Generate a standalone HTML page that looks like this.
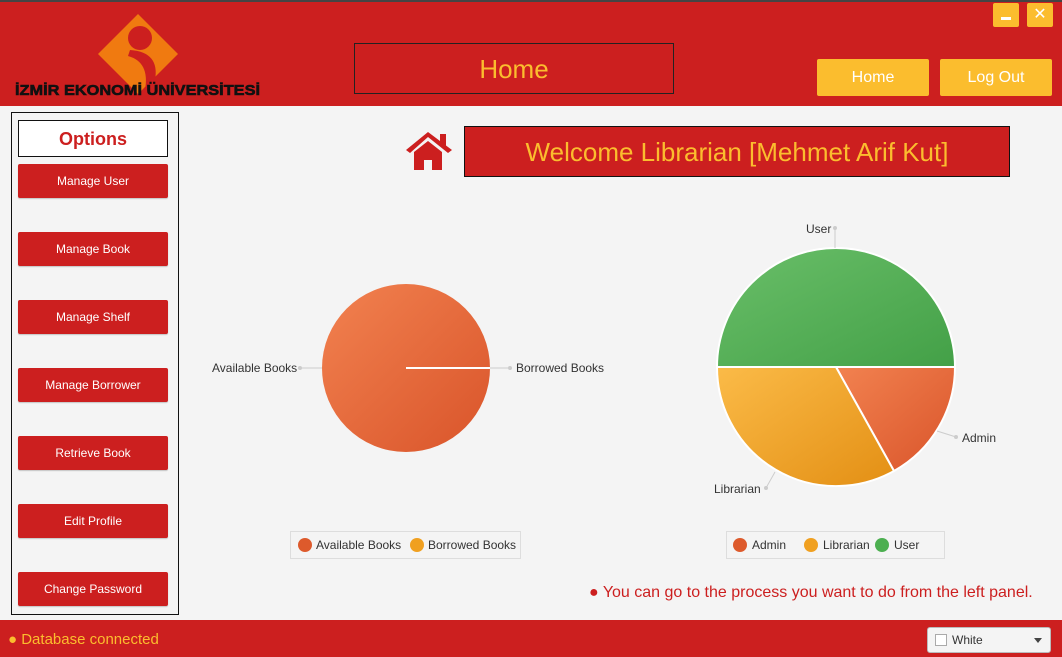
<!DOCTYPE html><html><head><style>
*{margin:0;padding:0;box-sizing:border-box}
body{width:1062px;height:657px;background:#f4f4f4;font-family:"Liberation Sans","DejaVu Sans",sans-serif;position:relative;overflow:hidden}
.a{position:absolute}
.hdr{left:0;top:0;width:1062px;height:106px;background:#cc1f1f;border-top:2px solid #444}
.btn{background:#cc1f1f;color:#fff;font-size:12px;text-align:center;line-height:34px;width:150px;height:34px;left:18px;border-radius:2px;box-shadow:0 1px 1px rgba(0,0,0,.2)}
.yb{background:#fbbd2e;color:#fff;font-size:16px;text-align:center;line-height:37px;height:37px;top:59px;border-radius:2px}
</style></head><body>
<div class="a hdr"></div>
<svg class="a" style="left:0;top:0" width="300" height="106">
<polygon points="138,14 178,54 138,94 98,54" fill="#f07a10"/>
<circle cx="140" cy="38" r="12" fill="#cc1f1f"/>
<path d="M130,50 Q160,52 155,80 L145,90 Q150,62 128,56 Z" fill="#cc1f1f"/>
<text x="15" y="95" font-family="Liberation Sans" font-weight="bold" font-size="15" fill="#111" stroke="#111" stroke-width="0.6" textLength="245" lengthAdjust="spacingAndGlyphs">İZMİR EKONOMİ ÜNİVERSİTESİ</text>
</svg>
<div class="a" style="left:354px;top:43px;width:320px;height:51px;border:1px solid #222;color:#fbbd2e;font-size:26px;text-align:center;line-height:50px">Home</div>
<div class="a yb" style="left:817px;width:112px">Home</div>
<div class="a yb" style="left:940px;width:112px">Log Out</div>
<div class="a" style="left:993px;top:3px;width:26px;height:24px;background:#fbbd2e;border-radius:2px"><div class="a" style="left:8px;top:14px;width:10px;height:3px;background:#fff"></div></div>
<div class="a" style="left:1027px;top:3px;width:26px;height:24px;background:#fbbd2e;border-radius:2px;color:#fff;font-weight:bold;text-align:center;line-height:24px;font-size:16px">✕</div>
<div class="a" style="left:11px;top:112px;width:168px;height:503px;border:1px solid #111"></div>
<div class="a" style="left:18px;top:120px;width:150px;height:37px;border:1px solid #111;background:#fff;color:#cc1f1f;font-weight:bold;font-size:18px;text-align:center;line-height:37px">Options</div>
<div class="a btn" style="top:164px">Manage User</div>
<div class="a btn" style="top:232px">Manage Book</div>
<div class="a btn" style="top:300px">Manage Shelf</div>
<div class="a btn" style="top:368px">Manage Borrower</div>
<div class="a btn" style="top:436px">Retrieve Book</div>
<div class="a btn" style="top:504px">Edit Profile</div>
<div class="a btn" style="top:572px">Change Password</div>
<svg class="a" style="left:404px;top:130px" width="50" height="42"><path d="M2,20 L24,2 L48,20 L44,23 L24,7 L6,23 Z" fill="#cc1f1f"/><rect x="36" y="4" width="6" height="12" fill="#cc1f1f"/><path d="M10,22 L24,11 L38,22 L38,40 L28,40 L28,30 L20,30 L20,40 L10,40 Z" fill="#cc1f1f"/></svg>
<div class="a" style="left:464px;top:126px;width:546px;height:51px;background:#cc1f1f;border:1px solid #111;color:#fbbd2e;font-size:26px;text-align:center;line-height:50px">Welcome Librarian [Mehmet Arif Kut]</div>
<svg class="a" style="left:0;top:0" width="1062" height="657">
<defs>
<linearGradient id="o" x1="0" y1="0" x2="1" y2="1"><stop offset="0" stop-color="#f28250"/><stop offset="1" stop-color="#d9542a"/></linearGradient>
<linearGradient id="g" x1="0" y1="0" x2="1" y2="1"><stop offset="0" stop-color="#6abf69"/><stop offset="1" stop-color="#43a047"/></linearGradient>
<linearGradient id="y" x1="0" y1="0" x2="1" y2="1"><stop offset="0" stop-color="#fbbb48"/><stop offset="1" stop-color="#e38f14"/></linearGradient>
</defs>
<circle cx="406" cy="368" r="84" fill="url(#o)"/>
<line x1="406" y1="368" x2="490" y2="368" stroke="#fff" stroke-width="2"/>
<line x1="300" y1="368" x2="322" y2="368" stroke="#ccc"/><circle cx="300" cy="368" r="2" fill="#ccc"/>
<line x1="490" y1="368" x2="510" y2="368" stroke="#ccc"/><circle cx="510" cy="368" r="2" fill="#ccc"/>
<text x="212" y="372" font-size="12" fill="#333">Available Books</text>
<text x="516" y="372" font-size="12" fill="#333">Borrowed Books</text>
<path d="M836,367 L717,367 A119,119 0 0 1 955,367 Z" fill="url(#g)" stroke="#fff" stroke-width="2"/>
<path d="M836,367 L955,367 A119,119 0 0 1 894,471 Z" fill="url(#o)" stroke="#fff" stroke-width="2"/>
<path d="M836,367 L894,471 A119,119 0 0 1 717,367 Z" fill="url(#y)" stroke="#fff" stroke-width="2"/>
<line x1="835" y1="228" x2="835" y2="248" stroke="#ccc"/><circle cx="835" cy="228" r="2" fill="#ccc"/>
<line x1="937" y1="431" x2="956" y2="437" stroke="#ccc"/><circle cx="956" cy="437" r="2" fill="#ccc"/>
<line x1="766" y1="488" x2="775" y2="472" stroke="#ccc"/><circle cx="766" cy="488" r="2" fill="#ccc"/>
<text x="806" y="233" font-size="12" fill="#333">User</text>
<text x="962" y="442" font-size="12" fill="#333">Admin</text>
<text x="714" y="493" font-size="12" fill="#333">Librarian</text>
<rect x="290.5" y="531.5" width="230" height="27" fill="#f4f4f4" stroke="#ddd"/>
<circle cx="305" cy="545" r="7" fill="#dd5a2c"/><text x="316" y="549" font-size="12" fill="#333">Available Books</text>
<circle cx="417" cy="545" r="7" fill="#f0a020"/><text x="428" y="549" font-size="12" fill="#333">Borrowed Books</text>
<rect x="726.5" y="531.5" width="218" height="27" fill="#f4f4f4" stroke="#ddd"/>
<circle cx="740" cy="545" r="7" fill="#dd5a2c"/><text x="752" y="549" font-size="12" fill="#333">Admin</text>
<circle cx="811" cy="545" r="7" fill="#f0a020"/><text x="823" y="549" font-size="12" fill="#333">Librarian</text>
<circle cx="882" cy="545" r="7" fill="#4caf50"/><text x="894" y="549" font-size="12" fill="#333">User</text>
</svg>
<div class="a" style="left:589px;top:584px;color:#cc1f1f;font-size:16px;white-space:nowrap">● You can go to the process you want to do from the left panel.</div>
<div class="a" style="left:0;top:620px;width:1062px;height:37px;background:#cc1f1f"></div>
<div class="a" style="left:8px;top:631px;color:#fbbd2e;font-size:15px">● Database connected</div>
<div class="a" style="left:927px;top:627px;width:124px;height:26px;background:#f4f4f4;border:1px solid #bbb;border-radius:3px;font-size:12px;color:#333;line-height:24px;padding-left:24px">White
<div class="a" style="left:7px;top:6px;width:12px;height:12px;background:#fff;border:1px solid #aaa"></div>
<div class="a" style="right:8px;top:10px;border:4px solid transparent;border-top:5px solid #444"></div></div>
</body></html>
